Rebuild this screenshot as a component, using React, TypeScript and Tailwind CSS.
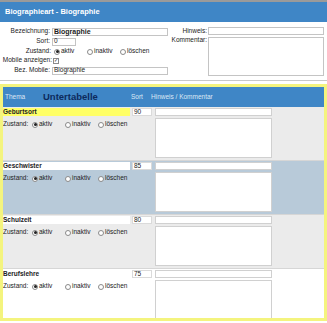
const font = { fontFamily: '"Liberation Sans", Arial, sans-serif' };

function Radio({ checked }: { checked?: boolean }) {
  return (
    <span className="inline-flex items-center justify-center w-[6px] h-[6px] rounded-full border border-[#8a8a8a] bg-white mr-[1px]">
      {checked && <span className="w-[3px] h-[3px] rounded-full bg-[#222]" />}
    </span>
  );
}

function Zustand() {
  return (
    <div className="flex items-center">
      <div className="w-[33px] flex items-center">
        <Radio checked />
        <span>aktiv</span>
      </div>
      <div className="w-[33px] flex items-center">
        <Radio />
        <span>inaktiv</span>
      </div>
      <div className="flex items-center">
        <Radio />
        <span>löschen</span>
      </div>
    </div>
  );
}

const rows = [
  { name: "Geburtsort", sort: "90", bg: "bg-[#ebebeb]", nameBg: "bg-[#ffff66]" },
  { name: "Geschwister", sort: "85", bg: "bg-[#b8cad9]", nameBg: "bg-white" },
  { name: "Schulzeit", sort: "80", bg: "bg-[#ebebeb]", nameBg: "bg-white" },
  { name: "Berufslehre", sort: "75", bg: "bg-white", nameBg: "bg-white" },
];

export default function App() {
  return (
    <div className="w-[327px] h-[323px] bg-white text-[6.5px] leading-none text-[#222] overflow-hidden whitespace-nowrap" style={font}>
      {/* Kopf */}
      <div className="border-t-[2px] border-[#9a9a9a] bg-[#3f86c6] h-[22px] flex items-center px-[5px] text-white font-bold text-[7.5px]">
        Biographieart - Biographie
      </div>

      {/* Formular */}
      <div className="flex pt-[5px] h-[59px] border-b border-[#c8c8c8]">
        <div className="w-[170px] flex flex-col">
          <div className="flex items-center h-[9px]">
            <span className="w-[52px] text-right pr-[2px]">Bezeichnung:</span>
            <div className="w-[116px] h-[8px] border border-[#c4c4c4] flex items-center px-[1px] font-bold text-[7px]">Biographie</div>
          </div>
          <div className="flex items-center h-[9px] mt-[1px]">
            <span className="w-[52px] text-right pr-[2px]">Sort:</span>
            <div className="w-[24px] h-[8px] border border-[#c4c4c4] flex items-center px-[1px]">0</div>
          </div>
          <div className="flex items-center h-[9px] mt-[1px]">
            <span className="w-[54px] text-right pr-[3px]">Zustand:</span>
            <Zustand />
          </div>
          <div className="flex items-center h-[9px]">
            <span className="w-[53px] text-right pr-[1px]">Mobile anzeigen:</span>
            <span className="w-[6px] h-[6px] border border-[#8a8a8a] flex items-center justify-center text-[5px] leading-none">✓</span>
          </div>
          <div className="flex items-center h-[9px] mt-[1px]">
            <span className="w-[52px] text-right pr-[2px]">Bez. Mobile:</span>
            <div className="w-[116px] h-[8px] border border-[#c4c4c4] flex items-center px-[1px]">Biographie</div>
          </div>
        </div>
        <div className="w-[38px] flex flex-col items-end pr-[1px]">
          <div className="h-[9px] flex items-center">Hinweis:</div>
          <div className="h-[9px] flex items-center">Kommentar:</div>
        </div>
        <div className="w-[116px] flex flex-col">
          <div className="h-[8px] border border-[#c4c4c4]" />
          <div className="h-[39px] mt-[2px] border border-[#c4c4c4]" />
        </div>
      </div>

      {/* Untertabelle */}
      <div className="mt-[3px] h-[237px] border-[3px] border-[#f4f47e] flex flex-col overflow-hidden">
        <div className="h-[20px] bg-[#3f86c6] flex items-center text-[#dce8f5] shrink-0">
          <span className="w-[40px] pl-[2px]">Thema</span>
          <span className="w-[88px] font-bold text-[9.5px] text-[#0d2a5c]">Untertabelle</span>
          <span className="w-[20px]">Sort</span>
          <span>Hinweis / Kommentar</span>
        </div>
        {rows.map((r) => (
          <div key={r.name} className={`${r.bg} h-[54px] shrink-0 flex border-b border-[#d6d6d6] pt-[1px]`}>
            <div className="w-[127px] flex flex-col">
              <div className={`${r.nameBg} h-[8px] font-bold flex items-center`}>{r.name}</div>
              <div className="flex items-center h-[7px] mt-[5px]">
                <span className="w-[29px]">Zustand:</span>
                <Zustand />
              </div>
            </div>
            <div className="w-[20px] ml-[2px] h-[8px] bg-white border border-[#dadada] flex items-center px-[1px]">{r.sort}</div>
            <div className="w-[117px] ml-[3px] flex flex-col">
              <div className="h-[8px] bg-white border border-[#d0d0d0]" />
              <div className="h-[40px] mt-[2px] bg-white border border-[#d0d0d0]" />
            </div>
          </div>
        ))}
      </div>
    </div>
  );
}
